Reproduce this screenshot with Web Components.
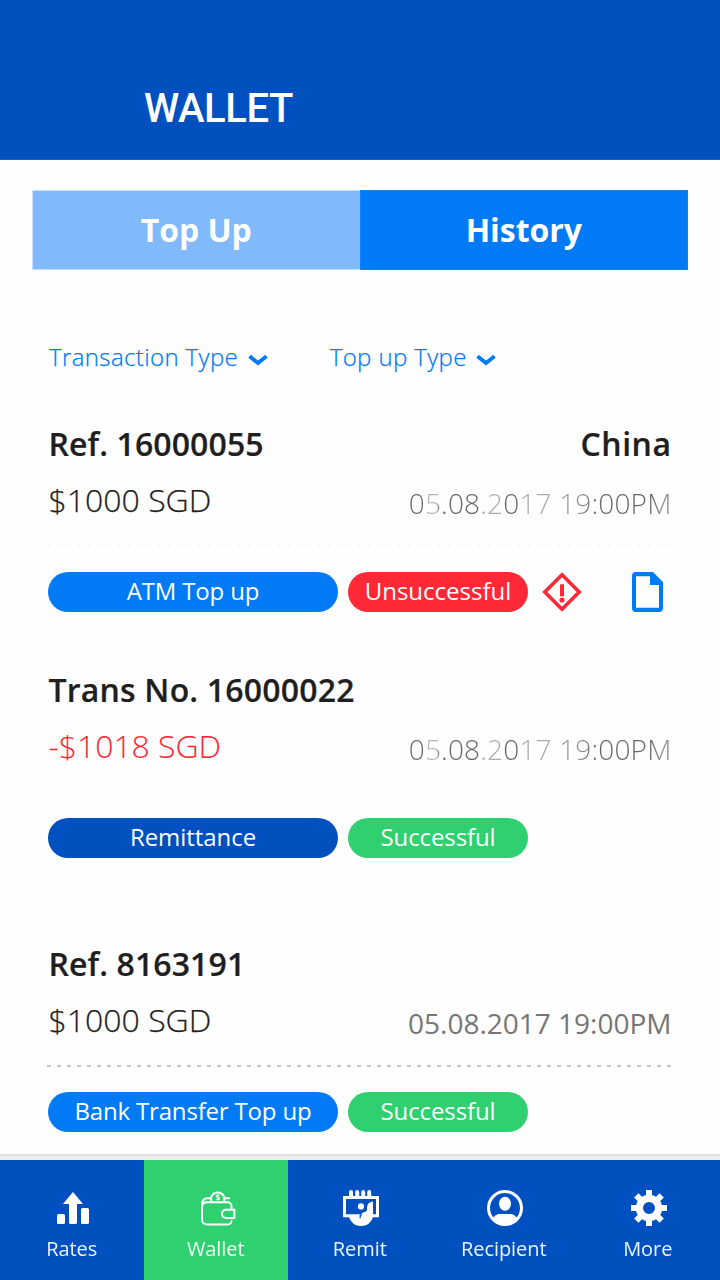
<!DOCTYPE html>
<html lang="en">
<head>
<meta charset="utf-8">
<title>Wallet</title>
<style>
html,body{margin:0;padding:0}
body{width:720px;height:1280px;overflow:hidden;background:#fefefe;color:#1f1f1f;font-family:"Open Sans","Noto Sans",sans-serif;
--navy:#0050c0;--blue:#007af5;--green:#2fd070;--red:#ff2836}
</style>
</head>
<body>
<wallet-app></wallet-app>
<script>
const define = (name, html, setup) => customElements.define(name, class extends HTMLElement {
  constructor() {
    super();
    this.attachShadow({ mode: 'open' }).innerHTML = html;
  }
  connectedCallback() { if (setup) setup(this, this.shadowRoot); }
});

define('app-header', `
<style>
:host{display:flex;box-sizing:border-box;height:160px;padding:85px 0 0 144px;background:var(--navy);border-bottom:1px solid #1a60c8}
h1{margin:0;color:#fff;font:500 40px/48px Roboto,sans-serif;letter-spacing:-.4px}
</style>
<h1><slot></slot></h1>`);

define('tab-button', `
<style>
:host{display:block;box-sizing:border-box;flex:1;height:80px;background:#80bafa;border:1px solid #c4dffb;border-right:0;color:#fff;font-weight:700;font-size:32px;line-height:78px;text-align:center;letter-spacing:-.05px}
:host([active]){background:var(--blue);border:1px solid #1684f4}
</style>
<slot></slot>`);

define('tab-bar', `
<style>:host{display:flex;margin:30px 32px 0}</style><slot></slot>`);

define('filter-menu', `
<style>
:host{display:flex;align-items:center;height:40px;color:var(--blue);font-weight:300;-webkit-text-stroke:.25px;font-size:24px;line-height:40px;letter-spacing:.38px;white-space:nowrap}
svg{margin:5px 0 0 9.500px}
</style>
<slot></slot><svg width="20" height="12" viewBox="0 0 20 12"><path d="M1.500 2.200 10 9l8.500-6.800" fill="none" stroke="var(--blue)" stroke-width="3.900"/></svg>`);

define('status-pill', `
<style>
:host{display:block;width:180px;height:40px;border-radius:20px;background:var(--green);color:#fff;font-weight:400;font-size:24px;line-height:38px;text-align:center;white-space:nowrap;letter-spacing:-.12px}
:host([wide]){width:290px;letter-spacing:-.18px}
:host([kind=topup]){background:var(--blue)}
:host([kind=remit]){background:var(--navy);letter-spacing:-.05px}
:host([kind=failed]){background:var(--red);letter-spacing:0}
</style>
<slot></slot>`);

define('alert-icon', `
<style>:host{display:block;width:40px;height:40px;margin-left:4px}svg{display:block}</style>
<svg width="40" height="40" viewBox="0 0 40 40"><path d="M20 2.800 37.200 20 20 37.200 2.800 20Z" fill="none" stroke="var(--red)" stroke-width="3.600"/><path d="M18 12.300h4v12h-4z" fill="var(--red)"/><circle cx="20" cy="28" r="2.600" fill="var(--red)"/></svg>`);

define('document-icon', `
<style>:host{display:block;width:32px;height:40px;margin-left:auto}svg{display:block}</style>
<svg width="32" height="40" viewBox="0 0 32 40"><path d="M4 0h17l10 10v26a4 4 0 0 1-4 4H4a4 4 0 0 1-4-4V4a4 4 0 0 1 4-4Zm0 4.300v31.500h23V13h-9V4.300Z" fill="var(--blue)" fill-rule="evenodd"/></svg>`);

define('transaction-card', `
<style>
:host{display:block;height:246px;padding:0 49px 0 48.500px}
.row{display:flex;justify-content:space-between;height:56px;line-height:56px;white-space:nowrap}
.title{font-weight:600;font-size:32px;letter-spacing:.1px;-webkit-text-stroke:.2px}
:host([debit]) .title{letter-spacing:.2px}
.place{letter-spacing:.500px;margin-right:-.5px}
.amount{font-weight:300;-webkit-text-stroke:.25px;font-size:32px}
:host([debit]) .amount{color:var(--red);-webkit-text-stroke:.1px;letter-spacing:-.05px}
.date{padding-top:3px;margin-right:-.5px;font-weight:300;font-size:28px;letter-spacing:.17px;
color:transparent;-webkit-background-clip:text;background-clip:text;
background-image:linear-gradient(90deg,#666 15px,#b5b5b5 16px 29px,#666 30px 70px,#aaa 71px 92px,#666 93px 109px,#aaa 110px 144px,#999 145px 172px,#808080 173px 182px,#666 188px 240px,#888 250px)}
:host([solid]) .date{color:#767676;background:none;font-weight:400;letter-spacing:0}
.rule{height:2px;margin:17px 0 25px -1.500px;background:repeating-linear-gradient(90deg,#f6f6f6 0 4px,transparent 4px 10px)}
:host([solid]) .rule{background-image:repeating-linear-gradient(90deg,#c6c6c6 0 4px,transparent 4px 10px)}
.tags{display:flex;gap:10px;margin:0 7px 0 -.5px}
</style>
<div class="row title"><span><slot name="title"></slot></span><span class="place"><slot name="place"></slot></span></div>
<div class="row"><span class="amount"><slot name="amount"></slot></span><span class="date"><slot name="date"></slot></span></div>
<div class="rule"></div>
<div class="tags"><slot></slot></div>`);

const ICONS = {
  rates: '<path d="M19 2 29 14h-6v18.500a1.500 1.500 0 0 1-1.500 1.500h-5a1.500 1.500 0 0 1-1.500-1.500V14H9Z"/><rect x="3" y="24" width="8" height="10" rx="1.600"/><rect x="27" y="18" width="8" height="16" rx="1.600"/>',
  wallet: '<g fill="none" stroke="#fff" stroke-width="2" stroke-linecap="round"><path d="M11.500 8.300H9.400A5.400 5.400 0 0 0 4 14v15.500a5 5 0 0 0 5 5h20.500a4 4 0 0 0 4-3.500"/><path d="M4.200 16C5 13 6.500 12.200 9 12.200h20.500a4 4 0 0 1 4 4v2.500M13.300 11.500A6.800 6.800 0 1 1 26.100 11.500M28 8.300h3.300"/><path d="M36.400 19.700H28a4.100 4.100 0 0 0 0 8.200h8.400Z"/></g><text x="19.700" y="11.200" text-anchor="middle" font-family="Open Sans" font-size="8" font-weight="700" letter-spacing="0">$</text>',
  remit: '<path d="M2.500 7.500h33v18.300h-33Z" fill="none" stroke="#fff" stroke-width="3"/><path d="M7 6V2a2 2 0 0 1 4 0v4zM13.200 6V2a2 2 0 0 1 4 0v4zM19.200 6V2a2 2 0 0 1 4 0v4zM25.200 6V2a2 2 0 0 1 4 0v4zM31 11.700v15.300C29 32.700 25 36 19 36S9 32.700 7 27h10.300v-3h2c1.300-1.500 3-2 4.700-2.500l1-1V18c0-3.800 2-6.300 6-6.300Z"/><circle cx="19" cy="16.400" r="3.100"/><path d="M17.600 24.300h2.600l-1.300 2-.4 2.200h-.9z" fill="var(--navy)"/>',
  recipient: '<circle cx="19" cy="18" r="16.500" fill="none" stroke="#fff" stroke-width="3"/><ellipse cx="19" cy="13.700" rx="6" ry="7"/><path d="M6.500 29.500C8 25.500 11 24 14 24q5 0 10 0c3 0 6 1.500 7.500 5.500C28 33.500 24 35.500 19 35.500s-9-2-12.500-6Z"/>',
  more: '<g fill="none" stroke="#fff"><circle cx="19" cy="18" r="9.600" stroke-width="7.200"/><path stroke-width="6" d="M19 0v7M19 29v7M1 18h7M30 18h7M6.300 5.300l5 5M26.700 25.700l5 5M6.300 30.700l5-5M26.700 10.300l5-5"/></g>'
};

define('nav-item', `
<style>
:host{display:flex;flex-direction:column;align-items:center;flex:1;height:120px;box-sizing:border-box;padding-top:30px;color:#fff;font-weight:400;font-size:20px;line-height:46px;letter-spacing:-.05px}
:host([active]){background:var(--green)}
svg{display:block;width:36px;height:36px;overflow:visible}
span{margin-right:.5px;opacity:.93}
</style>
<svg viewBox="0 0 36 36" fill="#fff"></svg><span><slot></slot></span>`,
(el, root) => { root.querySelector('svg').innerHTML = ICONS[el.getAttribute('icon')]; });

define('nav-bar', `
<style>:host{display:flex;background:var(--navy);border-top:4px solid #eee;box-shadow:0 -2px #e0e0e8}</style><slot></slot>`);

define('wallet-app', `
<style>
:host{display:flex;flex-direction:column;height:1280px;width:720px}
.filters{display:flex;gap:62px;margin:67px 49px 39px}
main{flex:1}
.last{height:190px;margin-top:28px}
</style>
<app-header>WALLET</app-header>
<tab-bar><tab-button>Top Up</tab-button><tab-button active>History</tab-button></tab-bar>
<div class="filters"><filter-menu>Transaction Type</filter-menu><filter-menu>Top up Type</filter-menu></div>
<main>
<transaction-card><span slot="title">Ref. 16000055</span><span slot="place">China</span><span slot="amount">$1000 SGD</span><span slot="date">05.08.2017 19:00PM</span>
<status-pill wide kind="topup">ATM Top up</status-pill><status-pill kind="failed">Unsuccessful</status-pill><alert-icon></alert-icon><document-icon></document-icon></transaction-card>
<transaction-card debit><span slot="title">Trans No. 16000022</span><span slot="amount">-$1018 SGD</span><span slot="date">05.08.2017 19:00PM</span>
<status-pill wide kind="remit">Remittance</status-pill><status-pill>Successful</status-pill></transaction-card>
<transaction-card solid class="last"><span slot="title">Ref. 8163191</span><span slot="amount">$1000 SGD</span><span slot="date">05.08.2017 19:00PM</span>
<status-pill wide kind="topup">Bank Transfer Top up</status-pill><status-pill>Successful</status-pill></transaction-card>
</main>
<nav-bar><nav-item icon="rates">Rates</nav-item><nav-item icon="wallet" active>Wallet</nav-item><nav-item icon="remit">Remit</nav-item><nav-item icon="recipient">Recipient</nav-item><nav-item icon="more">More</nav-item></nav-bar>`);
</script>
</body>
</html>
